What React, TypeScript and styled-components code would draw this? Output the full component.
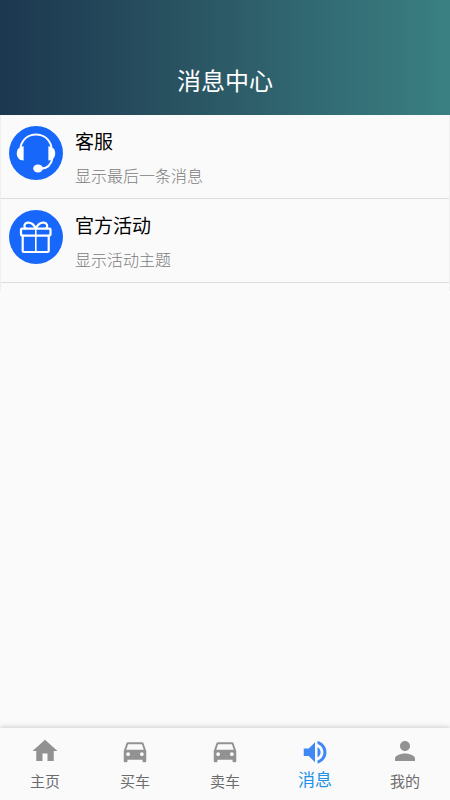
import React from 'react';
import styled, { createGlobalStyle } from 'styled-components';

const GlobalStyle = createGlobalStyle`
  * { box-sizing: border-box; }
  body {
    margin: 0;
    background: #fafafa;
    font-family: "Noto Sans CJK SC", "Noto Sans", sans-serif;
  }
`;

const Page = styled.div`
  display: flex;
  flex-direction: column;
  min-height: 100vh;
`;

const Header = styled.header`
  display: flex;
  justify-content: center;
  padding: 62px 16px 18px;
  background: linear-gradient(to right, #1c3750, #28505f 36%, #3a8083);
`;

const Title = styled.h1`
  margin: 0;
  color: #fff;
  font-size: 24px;
  line-height: 35px;
  font-weight: 400;
`;

const Main = styled.main`
  flex: 1;
`;

const List = styled.ul`
  margin: 0;
  padding: 0 0 8px;
  list-style: none;
  border: solid #f0f0f0;
  border-width: 0 1px;
  width: 100%;
`;

const Item = styled.li`
  border-bottom: 1px solid #dcdcdc;
`;

const ItemLink = styled.a`
  display: flex;
  gap: 12px;
  padding: 11px 8px;
  color: #000;
  text-decoration: none;
`;

const Badge = styled.svg`
  flex: none;
  width: 54px;
  height: 54px;
`;

const ItemText = styled.div`
  display: flex;
  flex-direction: column;
  gap: 7px;
`;

const ItemTitle = styled.span`
  font-size: 19px;
  line-height: 30px;
`;

const ItemNote = styled.span`
  color: #7c7c7c;
  font-size: 16px;
  line-height: 24px;
  font-weight: 300;
`;

const TabBar = styled.nav`
  position: sticky;
  bottom: 0;
  display: grid;
  grid-template-columns: repeat(5, 1fr);
  background: #fafafa;
  box-shadow: 0 -1px 5px rgba(0, 0, 0, 0.18);
`;

const Tab = styled.button<{ $active: boolean }>`
  display: flex;
  flex-direction: column;
  align-items: center;
  height: 72px;
  padding: 8px 0 0;
  border: 0;
  background: none;
  font-family: inherit;
  font-size: ${(p) => (p.$active ? 17 : 15)}px;
  line-height: ${(p) => (p.$active ? 26 : 30)}px;
  color: ${(p) => (p.$active ? '#2090e8' : '#6c6c6c')};
  cursor: pointer;
`;

const TabIcon = styled.svg<{ $active: boolean }>`
  width: 30px;
  height: 30px;
  fill: ${(p) => (p.$active ? '#4088f5' : '#929292')};
`;

const carPath =
  'M18.92 6.01C18.72 5.42 18.16 5 17.5 5h-11c-.66 0-1.21.42-1.42 1.01L3 12v8c0 .55.45 1 1 1h1c.55 0 1-.45 1-1v-1h12v1c0 .55.45 1 1 1h1c.55 0 1-.45 1-1v-8l-2.08-5.99zM6.5 16c-.83 0-1.5-.67-1.5-1.5S5.67 13 6.5 13s1.5.67 1.5 1.5S7.33 16 6.5 16zm11 0c-.83 0-1.5-.67-1.5-1.5s.67-1.5 1.5-1.5 1.5.67 1.5 1.5-.67 1.5-1.5 1.5zM5 11l1.5-4.5h11L19 11H5z';

const tabs = [
  { label: '主页', path: 'M10 20v-6h4v6h5v-8h3L12 3 2 12h3v8z' },
  { label: '买车', path: carPath },
  { label: '卖车', path: carPath },
  {
    label: '消息',
    path: 'M3 10v6h4l5 5V5L7 10H3zm13.5 3c0-1.77-1.02-3.29-2.5-4.03v8.05c1.48-.73 2.5-2.25 2.5-4.02zM14 4v2.4c2.7.8 4.7 3.4 4.7 6.600s-2 5.800-4.700 6.600V22c4.010-.91 7.200-4.600 7.200-9S18.010 4.900 14 4z',
    active: true,
  },
  {
    label: '我的',
    path: 'M12 12c2.21 0 4-1.79 4-4s-1.79-4-4-4-4 1.79-4 4 1.79 4 4 4zm0 2c-2.67 0-8 1.34-8 4v2h16v-2c0-2.66-5.33-4-8-4z',
  },
];

const HeadsetBadge = () => (
  <Badge viewBox="0 0 54 54" aria-hidden="true">
    <circle cx="27" cy="27" r="27" fill="#1867fb" />
    <path d="M11.5 21C13.5 13 19.5 8.4 27 8.4S40.5 13 42.5 21" fill="none" stroke="#fff" strokeWidth="2" />
    <path d="M14.6 20.2v14.2c-4.2 0-6.8-2.8-6.8-7s2.6-7.2 6.8-7.2z" fill="#fff" />
    <path d="M39.4 20.2v14.2c4.2 0 6.8-2.8 6.8-7s-2.6-7.2-6.8-7.2z" fill="#fff" />
    <path d="M43.3 33c-1.3 5.5-4.3 9-10.3 9.6" fill="none" stroke="#fff" strokeWidth="2" />
    <ellipse cx="29" cy="42.4" rx="4.8" ry="4" fill="#fff" />
  </Badge>
);

const GiftBadge = () => (
  <Badge viewBox="0 0 54 54" aria-hidden="true">
    <circle cx="27" cy="27" r="27" fill="#1867fb" />
    <g fill="none" stroke="#fff" strokeWidth="2.2" strokeLinejoin="round" strokeLinecap="round">
      <rect x="12" y="18.6" width="29.5" height="7" rx="1" />
      <path d="M13.7 25.6V41c0 .6.4 1 1 1h24c.6 0 1-.4 1-1V25.6" />
      <path d="M26.8 18.6V42" strokeWidth="1.6" />
      <path d="M26.8 18.4C24.8 14.5 21.8 12.4 18.8 12.7c-3.3.3-4.6 3.5-2.2 5.7M26.8 18.4c2-3.9 5-6 8-5.7 3.3.3 4.6 3.5 2.2 5.7" />
    </g>
  </Badge>
);

const messages = [
  { title: '客服', note: '显示最后一条消息', Icon: HeadsetBadge },
  { title: '官方活动', note: '显示活动主题', Icon: GiftBadge },
];

export default function App() {
  return (
    <Page>
      <GlobalStyle />
      <Header>
        <Title>消息中心</Title>
      </Header>
      <Main>
        <List>
          {messages.map(({ title, note, Icon }) => (
            <Item key={title}>
              <ItemLink href="#">
                <Icon />
                <ItemText>
                  <ItemTitle>{title}</ItemTitle>
                  <ItemNote>{note}</ItemNote>
                </ItemText>
              </ItemLink>
            </Item>
          ))}
        </List>
      </Main>
      <TabBar>
        {tabs.map(({ label, path, active = false }) => (
          <Tab key={label} type="button" $active={active} aria-current={active ? 'page' : undefined}>
            <TabIcon $active={active} viewBox="0 0 24 24" aria-hidden="true">
              <path d={path} />
            </TabIcon>
            {label}
          </Tab>
        ))}
      </TabBar>
    </Page>
  );
}
